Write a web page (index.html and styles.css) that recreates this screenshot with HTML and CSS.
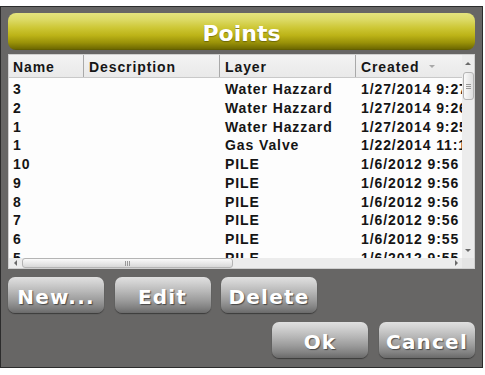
FILE: index.html
```html
<!DOCTYPE html>
<html>
<head>
<meta charset="utf-8">
<link rel="stylesheet" href="styles.css">
</head>
<body>
<div class="panel">
  <div class="title">Points</div>
  <div class="table">
    <div class="table-main">
      <div class="grid">
        <div class="head">
          <div class="th first">Name</div>
          <div class="th">Description</div>
          <div class="th">Layer</div>
          <div class="th">Created <span class="sort"></span></div>
        </div>
        <div class="rows">
          <div class="row"><div class="c first">3</div><div class="c"></div><div class="c">Water Hazzard</div><div class="c">1/27/2014 9:27 AM</div></div>
          <div class="row"><div class="c first">2</div><div class="c"></div><div class="c">Water Hazzard</div><div class="c">1/27/2014 9:26 AM</div></div>
          <div class="row"><div class="c first">1</div><div class="c"></div><div class="c">Water Hazzard</div><div class="c">1/27/2014 9:25 AM</div></div>
          <div class="row"><div class="c first">1</div><div class="c"></div><div class="c">Gas Valve</div><div class="c">1/22/2014 11:10 AM</div></div>
          <div class="row"><div class="c first">10</div><div class="c"></div><div class="c">PILE</div><div class="c">1/6/2012 9:56 AM</div></div>
          <div class="row"><div class="c first">9</div><div class="c"></div><div class="c">PILE</div><div class="c">1/6/2012 9:56 AM</div></div>
          <div class="row"><div class="c first">8</div><div class="c"></div><div class="c">PILE</div><div class="c">1/6/2012 9:56 AM</div></div>
          <div class="row"><div class="c first">7</div><div class="c"></div><div class="c">PILE</div><div class="c">1/6/2012 9:56 AM</div></div>
          <div class="row"><div class="c first">6</div><div class="c"></div><div class="c">PILE</div><div class="c">1/6/2012 9:55 AM</div></div>
          <div class="row"><div class="c first">5</div><div class="c"></div><div class="c">PILE</div><div class="c">1/6/2012 9:55 AM</div></div>
        </div>
      </div>
      <div class="vscroll">
        <div class="arrow-box"><span class="tri up"></span></div>
        <div class="vthumb"><span class="grip-h"></span></div>
        <div class="spacer"></div>
        <div class="arrow-box"><span class="tri down"></span></div>
      </div>
    </div>
    <div class="hscroll">
      <div class="harrow"><span class="tri left"></span></div>
      <div class="hthumb"><span class="grip-v"></span></div>
      <div class="spacer"></div>
      <div class="harrow"><span class="tri right"></span></div>
      <div class="corner"></div>
    </div>
  </div>
  <div class="btnrow">
    <div class="btn">New...</div>
    <div class="btn">Edit</div>
    <div class="btn">Delete</div>
  </div>
  <div class="btnrow end">
    <div class="btn">Ok</div>
    <div class="btn">Cancel</div>
  </div>
</div>
</body>
</html>
```
FILE: styles.css
```css
* { box-sizing: border-box; }
html, body { margin: 0; padding: 0; background: #ffffff; }
body { font-family: "Liberation Sans", Arial, sans-serif; }

.panel {
  margin-top: 6px;
  width: 483px;
  height: 362px;
  border: 1px solid #2c2c2c;
  background: #676665;
  padding: 6px 7px 0 7px;
}

.title {
  height: 37px;
  width: 467px;
  border-radius: 8px;
  background: linear-gradient(to bottom, #e4e47e 0%, #dcda66 18%, #cdc735 40%, #bdb418 60%, #9a9208 80%, #716c02 96%, #5c5800 100%);
  color: #ffffff;
  font-family: "DejaVu Sans", sans-serif;
  font-weight: bold;
  font-size: 22px;
  display: flex;
  align-items: center;
  justify-content: center;
  text-shadow: 0 1px 1px rgba(60, 60, 0, 0.5);
  padding-top: 4px;
}

.table {
  margin-top: 4px;
  width: 467px;
  height: 215px;
  border: 1px solid #cfcfcf;
  background: #fdfdfd;
  display: flex;
  flex-direction: column;
}

.table-main {
  height: 203px;
  display: flex;
}

.grid {
  flex: 1;
  overflow: hidden;
  display: flex;
  flex-direction: column;
}

.head, .row {
  display: grid;
  grid-template-columns: 74px 136px 136px 1fr;
}

.head {
  flex: none;
  height: 23px;
  background: linear-gradient(to bottom, #f3f3f3, #e9e9e9);
  border-bottom: 1px solid #c9c9c9;
}

.th {
  font-weight: bold;
  font-size: 14px;
  letter-spacing: 0.9px;
  color: #161616;
  padding-left: 5px;
  padding-top: 1px;
  border-left: 1px solid #a9a9a9;
  display: flex;
  align-items: center;
  white-space: nowrap;
}
.th.first { border-left: none; padding-left: 4px; }

.sort {
  display: inline-block;
  margin-left: 10px;
  width: 0; height: 0;
  border-left: 3px solid transparent;
  border-right: 3px solid transparent;
  border-top: 3px solid #a8a8a8;
}

.rows {
  flex: none;
  padding-top: 2px;
}

.row { height: 18.75px; }

.c {
  font-weight: bold;
  font-size: 14px;
  letter-spacing: 0.9px;
  color: #151515;
  line-height: 18.75px;
  padding-left: 6px;
  white-space: nowrap;
  overflow: hidden;
}
.c.first { padding-left: 4px; }

.vscroll {
  width: 12px;
  background: #ececec;
  display: flex;
  flex-direction: column;
  align-items: center;
}
.arrow-box {
  height: 16px;
  width: 12px;
  display: flex;
  align-items: center;
  justify-content: center;
}
.vthumb {
  margin-top: 1px;
  width: 11px;
  height: 28px;
  border: 1px solid #b4b4b4;
  border-radius: 3px;
  background: linear-gradient(to right, #fafafa, #dedede);
  display: flex;
  align-items: center;
  justify-content: center;
}
.grip-h {
  width: 5px; height: 5px;
  border-top: 1px solid #999;
  border-bottom: 1px solid #999;
  background: linear-gradient(#999, #999) center / 5px 1px no-repeat;
}
.spacer { flex: 1; }

.tri { display: block; width: 0; height: 0; }
.tri.up { border-left: 3px solid transparent; border-right: 3px solid transparent; border-bottom: 3px solid #6a6a6a; }
.tri.down { border-left: 3px solid transparent; border-right: 3px solid transparent; border-top: 3px solid #6a6a6a; }
.tri.left { border-top: 3px solid transparent; border-bottom: 3px solid transparent; border-right: 3px solid #6a6a6a; }
.tri.right { border-top: 3px solid transparent; border-bottom: 3px solid transparent; border-left: 3px solid #6a6a6a; }

.hscroll {
  height: 10px;
  background: #ececec;
  display: flex;
  align-items: center;
}
.harrow {
  width: 12px;
  height: 10px;
  display: flex;
  align-items: center;
  justify-content: center;
}
.hthumb {
  margin-left: 1px;
  width: 211px;
  height: 10px;
  border: 1px solid #b4b4b4;
  border-radius: 3px;
  background: linear-gradient(to bottom, #fafafa, #d8d8d8);
  display: flex;
  align-items: center;
  justify-content: center;
}
.grip-v {
  width: 5px; height: 5px;
  border-left: 1px solid #999;
  border-right: 1px solid #999;
  background: linear-gradient(#999, #999) center / 1px 5px no-repeat;
}
.corner { width: 12px; height: 10px; background: #e4e4e4; }

.btnrow {
  margin-top: 8px;
  display: flex;
  gap: 10.5px;
}
.btnrow.end {
  margin-top: 9px;
  justify-content: flex-end;
  gap: 11px;
}

.btn {
  width: 96px;
  height: 36px;
  border-radius: 7px;
  background: linear-gradient(to bottom, #e0e0e0 0%, #d2d2d2 15%, #b8b8b8 40%, #9c9c9c 65%, #828282 85%, #6a6a6a 100%);
  box-shadow: 0 1px 1px rgba(30, 30, 30, 0.6);
  color: #ffffff;
  font-family: "DejaVu Sans", sans-serif;
  font-weight: bold;
  font-size: 20px;
  letter-spacing: 1.2px;
  display: flex;
  align-items: center;
  justify-content: center;
  text-shadow: 1px 1px 1px rgba(40, 40, 40, 0.7);
  padding-top: 3px;
}
```
